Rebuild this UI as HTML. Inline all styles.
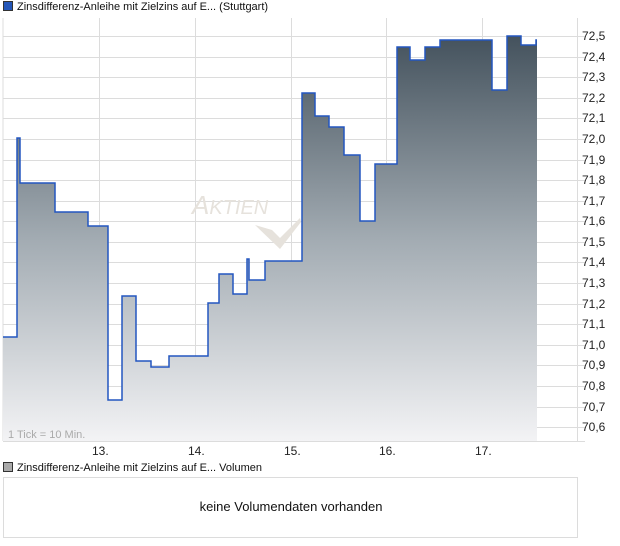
<!DOCTYPE html>
<html><head><meta charset="utf-8"><style>
body{margin:0;width:620px;height:546px;background:#fff;font-family:"Liberation Sans",sans-serif;overflow:hidden;position:relative}
.t{position:absolute;font-size:11px;color:#111;white-space:nowrap}
.sq{display:inline-block;width:8px;height:8px;border:1px solid #333;vertical-align:-1px;margin-right:4px}
</style></head><body>
<div class="t" style="left:3px;top:1px"><span class="sq" style="background:#2456b8"></span>Zinsdifferenz-Anleihe mit Zielzins auf E... (Stuttgart)</div>
<svg width="620" height="546" style="position:absolute;left:0;top:0">
<defs><linearGradient id="g" x1="0" y1="36" x2="0" y2="441" gradientUnits="userSpaceOnUse"><stop offset="0" stop-color="#44525d"/><stop offset="0.5" stop-color="#a2abb2"/><stop offset="1" stop-color="#f3f3f5"/></linearGradient></defs>
<g stroke="#dcdcdc" stroke-width="1">
<line x1="3" y1="18" x2="3" y2="441"/><line x1="3" y1="441.5" x2="585" y2="441.5"/><line x1="577.5" y1="18" x2="577.5" y2="441"/>
<line x1="99.5" y1="18" x2="99.5" y2="441"/><line x1="195.5" y1="18" x2="195.5" y2="441"/><line x1="291.5" y1="18" x2="291.5" y2="441"/><line x1="386.5" y1="18" x2="386.5" y2="441"/><line x1="482.5" y1="18" x2="482.5" y2="441"/>
<line x1="3" y1="36.5" x2="585" y2="36.5"/><line x1="3" y1="57.5" x2="585" y2="57.5"/><line x1="3" y1="77.5" x2="585" y2="77.5"/><line x1="3" y1="98.5" x2="585" y2="98.5"/><line x1="3" y1="118.5" x2="585" y2="118.5"/><line x1="3" y1="139.5" x2="585" y2="139.5"/><line x1="3" y1="160.5" x2="585" y2="160.5"/><line x1="3" y1="180.5" x2="585" y2="180.5"/><line x1="3" y1="201.5" x2="585" y2="201.5"/><line x1="3" y1="221.5" x2="585" y2="221.5"/><line x1="3" y1="242.5" x2="585" y2="242.5"/><line x1="3" y1="262.5" x2="585" y2="262.5"/><line x1="3" y1="283.5" x2="585" y2="283.5"/><line x1="3" y1="304.5" x2="585" y2="304.5"/><line x1="3" y1="324.5" x2="585" y2="324.5"/><line x1="3" y1="345.5" x2="585" y2="345.5"/><line x1="3" y1="365.5" x2="585" y2="365.5"/><line x1="3" y1="386.5" x2="585" y2="386.5"/><line x1="3" y1="407.5" x2="585" y2="407.5"/><line x1="3" y1="427.5" x2="585" y2="427.5"/>
</g>
<text x="192" y="214" font-size="26" font-style="italic" fill="#e6e2dc" font-family="Liberation Sans">A<tspan font-size="20">KTIEN</tspan></text>
<path d="M255 225 L272 230 L280 238 L300 218 L301 222 L280 249 Z" fill="#e6e2dc"/>
<path id="p" d="M3 337 H17 V138 H20 V183 H55 V212 H88 V226 H108 V400 H122 V296 H136 V361 H151 V367 H169 V356 H208 V303 H219 V274 H233 V294 H247 V259 H249 V280 H265 V261 H302 V93 H315 V116 H329 V127 H344 V155 H360 V221 H375 V164 H397 V47 H410 V60 H425 V47 H440 V40 H492 V90 H507 V36 H521 V45 H536 V40 H537" fill="none"/>
<path d="M3 337 H17 V138 H20 V183 H55 V212 H88 V226 H108 V400 H122 V296 H136 V361 H151 V367 H169 V356 H208 V303 H219 V274 H233 V294 H247 V259 H249 V280 H265 V261 H302 V93 H315 V116 H329 V127 H344 V155 H360 V221 H375 V164 H397 V47 H410 V60 H425 V47 H440 V40 H492 V90 H507 V36 H521 V45 H536 V40 H537 V441 H3 Z" fill="url(#g)"/>
<use href="#p" stroke="#2356c0" stroke-width="1.5"/>
<g font-size="12" fill="#222" font-family="Liberation Sans">
<text x="582" y="40">72,5</text><text x="582" y="61">72,4</text><text x="582" y="81">72,3</text><text x="582" y="102">72,2</text><text x="582" y="122">72,1</text><text x="582" y="143">72,0</text><text x="582" y="164">71,9</text><text x="582" y="184">71,8</text><text x="582" y="205">71,7</text><text x="582" y="225">71,6</text><text x="582" y="246">71,5</text><text x="582" y="266">71,4</text><text x="582" y="287">71,3</text><text x="582" y="308">71,2</text><text x="582" y="328">71,1</text><text x="582" y="349">71,0</text><text x="582" y="369">70,9</text><text x="582" y="390">70,8</text><text x="582" y="411">70,7</text><text x="582" y="431">70,6</text>
<text x="92" y="455">13.</text><text x="188" y="455">14.</text><text x="284" y="455">15.</text><text x="379" y="455">16.</text><text x="475" y="455">17.</text>
</g>
<text x="8" y="438" font-size="11" fill="#aaa" font-family="Liberation Sans">1 Tick = 10 Min.</text>
<rect x="3.5" y="477.5" width="574" height="60" fill="none" stroke="#dcdcdc"/>
<text x="291" y="511" font-size="13" fill="#111" text-anchor="middle" font-family="Liberation Sans">keine Volumendaten vorhanden</text>
</svg>
<div class="t" style="left:3px;top:462px"><span class="sq" style="background:#aaa"></span>Zinsdifferenz-Anleihe mit Zielzins auf E... Volumen</div>
</body></html>
